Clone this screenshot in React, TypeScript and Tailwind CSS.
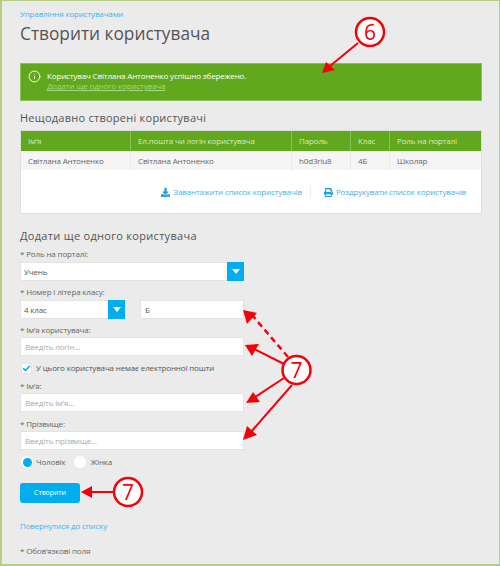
import { Info, Check } from 'lucide-react'
import { FaDownload, FaPrint } from 'react-icons/fa'

const inputClass = 'block h-[19px] bg-white border border-[#e3e3e3] px-[4px] text-[8px] tracking-[-0.15px] text-[#555] placeholder:text-[#aaa] outline-none'
const labelClass = 'block h-[12px] leading-[12px] text-[8px] tracking-[-0.15px] text-[#666]'

function SelectBox({ value, className }: { value: string; className: string }) {
    return (
        <div className={`flex h-[19px] bg-white border border-[#e3e3e3] ${className}`}>
            <span className="flex-1 pl-[3px] leading-[17px] text-[8px] tracking-[-0.15px] text-[#555]">{value}</span>
            <span className="flex h-[19px] w-[17px] -mt-px -mr-px items-center justify-center bg-[#00aeef]">
                <span className="h-0 w-0 border-x-[4.5px] border-t-[5px] border-x-transparent border-t-white" />
            </span>
        </div>
    )
}

function Annotations() {
    const red = '#f5000a'
    return (
        <svg className="absolute inset-0 pointer-events-none" width="500" height="566" viewBox="0 0 500 566">
            <g stroke={red} strokeWidth="2" fill="none">
                <line x1="358" y1="43" x2="330" y2="66" />
                <line x1="288" y1="357" x2="252" y2="315" strokeDasharray="6 4" strokeWidth="2.5" />
                <line x1="284" y1="364" x2="254" y2="349" />
                <line x1="284" y1="378" x2="252" y2="399" />
                <line x1="292" y1="385" x2="250" y2="433" />
                <line x1="114" y1="492" x2="90" y2="492" />
            </g>
            <g fill={red}>
                <polygon points="322,73 326,62 335,70" />
                <polygon points="243,310 257,313 247,324" />
                <polygon points="245,345 259,344 252,356" />
                <polygon points="246,403 253,392 260,402" />
                <polygon points="243,440 247,426 257,435" />
                <polygon points="81,492 92,486 92,498" />
            </g>
            <g fill="#fff" stroke={red} strokeWidth="2.5">
                <circle cx="370" cy="32" r="14" />
                <circle cx="296.5" cy="370" r="14" />
                <circle cx="128" cy="492" r="14" />
            </g>
            <g fill={red} fontFamily="'Open Sans', sans-serif" fontSize="21" textAnchor="middle">
                <text x="370" y="40">6</text>
                <text x="296.5" y="378">7</text>
                <text x="128" y="500">7</text>
            </g>
        </svg>
    )
}

export default function App() {
    return (
        <div className="relative h-[566px] w-[500px] overflow-hidden bg-[#ebebeb] font-['Open_Sans',sans-serif]">
            <div className="h-[566px] border-t border-l-2 border-b-2 border-r border-[#b5cf7e] pl-[18px] pr-[17px]">
                <a className="block pt-[7px] h-[20px] leading-[12px] text-[8px] tracking-[-0.15px] text-[#45b1ea]">Управління користувачами</a>
                <h1 className="h-[26px] leading-[26px] text-[17.3px] text-[#555]">Створити користувача</h1>

                {/* Alert */}
                <div className="mt-[16px] flex h-[38px] w-[462px] items-start gap-[6px] border border-[#8ec05a] bg-[#62a81e] pl-[7px] pt-[7px]">
                    <Info size={13} className="-mt-px text-white" strokeWidth={1.75} />
                    <div className="text-[8px] tracking-[-0.15px] leading-[10px]">
                        <p className="text-white">Користувач Світлана Антоненко успішно збережено.</p>
                        <a className="text-[#a5dc7c] underline">Додати ще одного користувача</a>
                    </div>
                </div>

                {/* Recent users */}
                <h2 className="mt-[7px] h-[20px] leading-[20px] text-[11px] tracking-[0.25px] text-[#555]">Нещодавно створені користувачі</h2>
                <div className="mt-[2px] h-[84px] w-[462px] border border-[#dedede] bg-white">
                    <div className="flex h-[20px] bg-[#62a81e] text-[8px] tracking-[-0.15px] leading-[20px] text-[#d5ecc0]">
                        <div className="w-[110px] border-r border-[#8ec05a] pl-[7px]">Ім’я</div>
                        <div className="w-[161px] border-r border-[#8ec05a] pl-[7px]">Ел.пошта чи логін користувача</div>
                        <div className="w-[59px] border-r border-[#8ec05a] pl-[7px]">Пароль</div>
                        <div className="w-[39px] border-r border-[#8ec05a] pl-[7px]">Клас</div>
                        <div className="flex-1 pl-[7px]">Роль на порталі</div>
                    </div>
                    <div className="flex h-[19px] bg-[#f5f5f5] text-[8px] tracking-[-0.15px] leading-[19px] text-[#666]">
                        <div className="w-[110px] border-r border-[#e8e8e8] pl-[7px]">Світлана Антоненко</div>
                        <div className="w-[161px] border-r border-[#e8e8e8] pl-[7px]">Світлана Антоненко</div>
                        <div className="w-[59px] border-r border-[#e8e8e8] pl-[7px]">h0d3riu8</div>
                        <div className="w-[39px] border-r border-[#e8e8e8] pl-[7px]">4Б</div>
                        <div className="flex-1 pl-[7px]">Школяр</div>
                    </div>
                    <div className="mt-[12px] flex h-[20px] items-center justify-end pr-[15px] text-[8px] tracking-[-0.15px] text-[#45b1ea]">
                        <FaDownload size={9} className="mr-[3px] text-[#1e9fe0]" />
                        <span>Завантажити список користувачів</span>
                        <span className="ml-[8px] mr-[13px] h-[10px] w-px bg-[#e8e8e8]" />
                        <FaPrint size={9} className="mr-[3px] text-[#1e9fe0]" />
                        <span>Роздрукувати список користувачів</span>
                    </div>
                </div>

                {/* Add form */}
                <h2 className="mt-[12px] h-[20px] leading-[20px] text-[11px] tracking-[0.3px] text-[#555]">Додати ще одного користувача</h2>
                <form className="w-[224px]">
                    <label className={`${labelClass} mt-[2px]`}>* Роль на порталі:</label>
                    <SelectBox value="Учень" className="mt-[2px] w-full" />

                    <label className={`${labelClass} mt-[5px]`}>* Номер і літера класу:</label>
                    <div className="mt-[2px] flex gap-[15px]">
                        <SelectBox value="4 клас" className="w-[105px]" />
                        <input className={`${inputClass} w-[104px]`} defaultValue="Б" />
                    </div>

                    <label className={`${labelClass} mt-[5px]`}>* Ім’я користувача:</label>
                    <input className={`${inputClass} mt-[1px] w-full`} placeholder="Введіть логін..." />

                    <div className="mt-[2px] flex h-[20px] items-center gap-[4px] text-[8px] tracking-[-0.15px] text-[#555]">
                        <span className="ml-[1px] flex h-[11px] w-[11px] items-center justify-center bg-white border border-[#e3e3e3]">
                            <Check size={9} strokeWidth={4} className="shrink-0 text-[#00aeef]" />
                        </span>
                        <span>У цього користувача немає електронної пошти</span>
                    </div>

                    <label className={`${labelClass} mt-[2px]`}>* Ім’я:</label>
                    <input className={`${inputClass} mt-[1px] w-full`} placeholder="Введіть ім’я..." />

                    <label className={`${labelClass} mt-[6px]`}>* Прізвище:</label>
                    <input className={`${inputClass} mt-[1px] w-full`} placeholder="Введіть прізвище..." />

                    <div className="mt-[2px] flex h-[20px] items-center text-[8px] tracking-[-0.15px] text-[#666]">
                        <span className="ml-[1px] flex h-[12px] w-[12px] items-center justify-center rounded-full bg-white">
                            <span className="h-[9px] w-[9px] rounded-full bg-[#00aeef]" />
                        </span>
                        <span className="ml-[3px]">Чоловік</span>
                        <span className="ml-[9px] h-[12px] w-[12px] rounded-full bg-white" />
                        <span className="ml-[4px]">Жінка</span>
                    </div>

                    <button type="button" className="mt-[11px] block h-[20px] w-[60px] rounded-[3px] bg-[#00aeef] text-[6.9px] text-white">Створити</button>
                </form>

                <a className="mt-[17px] block h-[12px] leading-[12px] text-[8px] tracking-[-0.15px] text-[#45b1ea]">Повернутися до списку</a>
                <p className="mt-[13px] h-[12px] leading-[12px] text-[8px] tracking-[-0.15px] text-[#666]">* Обов’язкові поля</p>
            </div>
            <Annotations />
        </div>
    )
}
